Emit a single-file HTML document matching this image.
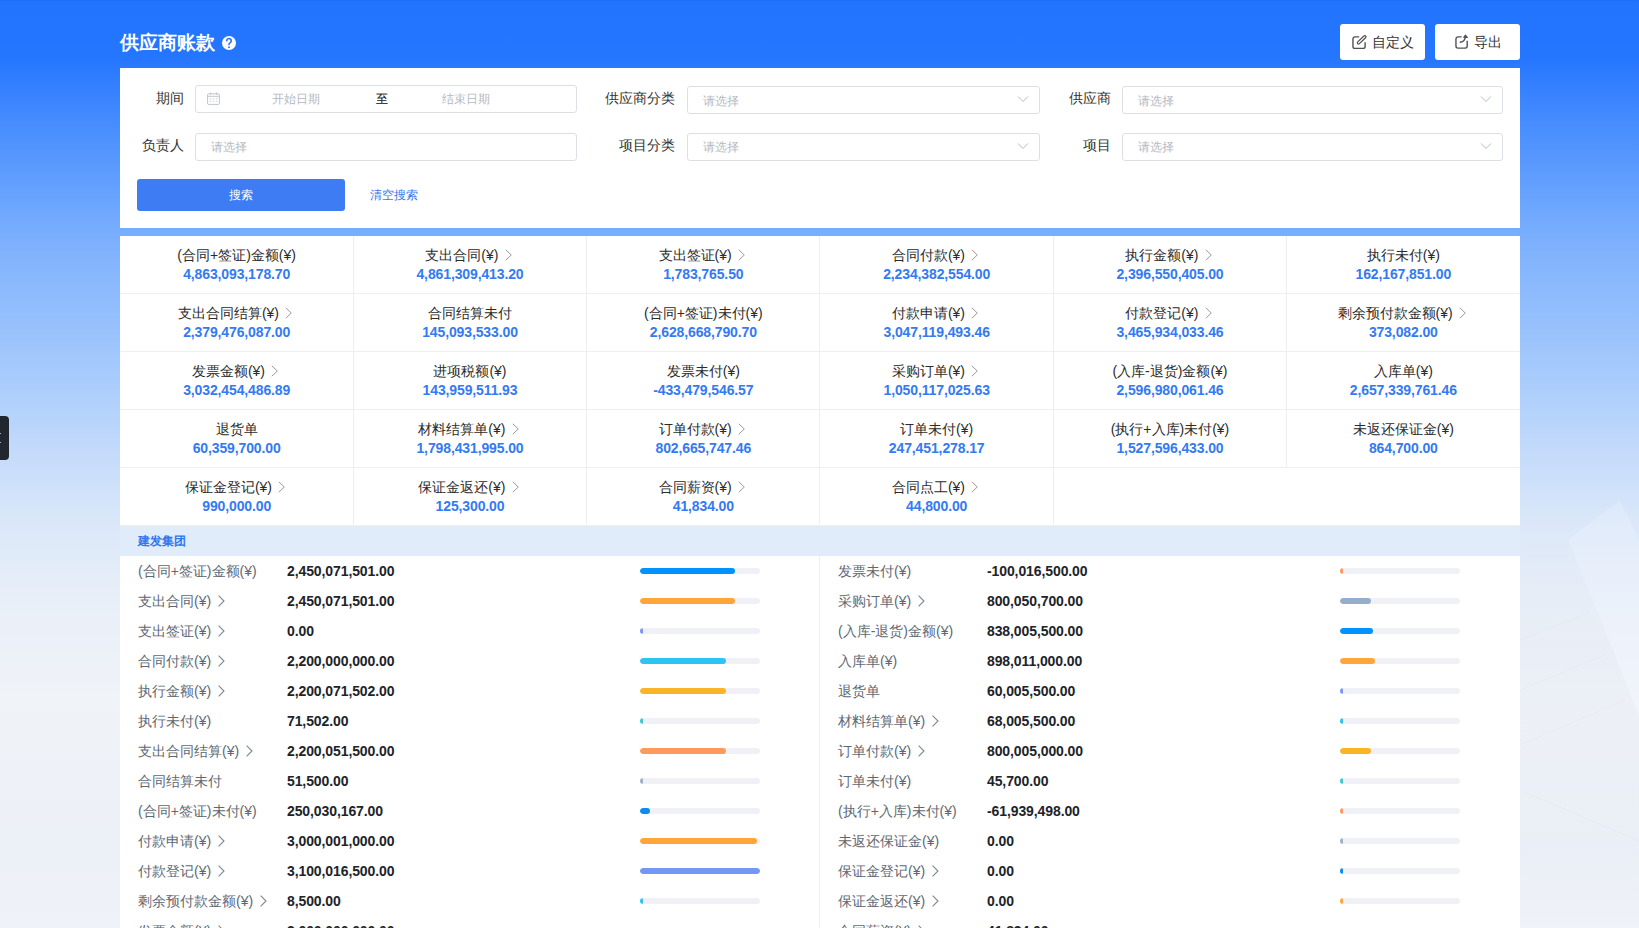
<!DOCTYPE html>
<html><head><meta charset="utf-8">
<style>
*{box-sizing:border-box;margin:0;padding:0}
html,body{width:1639px;height:928px;overflow:hidden}
body{position:relative;font-family:"Liberation Sans",sans-serif;background:linear-gradient(180deg,#1e6ff0 0px,#2274ff 2px,#2475ff 55px,#4a8ffe 130px,#7cb0fd 240px,#a6cafc 370px,#c3dafb 450px,#dae7f9 520px,#e9eff8 600px,#f0f3f8 700px,#ecf0f7 850px,#eff2f8 928px);}
.abs{position:absolute}
.title{position:absolute;left:120px;top:30.5px;color:#fff;font-size:18.6px;letter-spacing:0px;font-weight:bold;line-height:24px;letter-spacing:0px}
.q{position:absolute;left:222px;top:36px;width:14px;height:14px;border-radius:50%;background:#fff;color:#2675ff;font-size:11px;font-weight:bold;line-height:14px;text-align:center}
.btn{position:absolute;top:24px;height:36px;background:#fff;border-radius:3px;color:#333;font-size:14px;line-height:36px}
.card{position:absolute;left:120px;top:68px;width:1400px;height:160px;background:#fff}
.lab{position:absolute;font-size:14px;color:#333;line-height:20px;text-align:right}
.inp{position:absolute;height:28px;border:1px solid #dcdfe6;border-radius:3px;background:#fff}
.ph{position:absolute;font-size:12px;color:#b5b9c2;line-height:17px}
.chev{position:absolute;right:9.8px;top:8.2px}
.grid{position:absolute;left:120px;top:236px;width:1400px;height:290px;background:#fff}
.cell{position:absolute;width:233.333px;height:58px;text-align:center}
.gl{position:absolute;background:#efefef;display:block}
.cl{position:absolute;left:0;right:0;top:10px;font-size:14px;color:#2b2b2b;line-height:18px;white-space:nowrap}
.cl .arr{margin-left:2.4px;vertical-align:-1px}
.cv{position:absolute;left:0;right:0;top:30px;font-size:14px;letter-spacing:-0.12px;color:#347af2;font-weight:bold;line-height:16px}
.ghead{position:absolute;left:120px;top:526px;width:1400px;height:30px;background:#e1ecfb;color:#2f76f0;font-size:12px;font-weight:bold;line-height:30px;padding-left:18px}
.list{position:absolute;left:120px;top:556px;width:1400px;height:372px;background:#fff}
.vdiv{position:absolute;left:819px;top:556px;width:1px;height:372px;background:#eeeeee}
.dl{position:absolute;font-size:14px;color:#5e6873;line-height:30px;white-space:nowrap}
.dl .arr2{margin-left:3px;vertical-align:-1px}
.dv{position:absolute;font-size:14px;letter-spacing:-0.1px;color:#20242a;font-weight:bold;line-height:30px;white-space:nowrap}
.bar{position:absolute;width:120px;height:6px;border-radius:3px;background:#eff1f6;overflow:hidden}
.bar i{display:block;height:6px;border-radius:3px}
.tab{position:absolute;left:0;top:416px;width:9px;height:44px;background:#22262f;border-radius:0 4px 4px 0}
</style></head><body>
<svg class="abs" style="left:0;top:0" width="1639" height="928" viewBox="0 0 1639 928">
<defs><linearGradient id="bg1" x1="0" y1="0" x2="0" y2="1"><stop offset="0" stop-color="#dde4ee" stop-opacity="0"/><stop offset="0.35" stop-color="#dde4ee" stop-opacity="0.22"/><stop offset="0.8" stop-color="#dde4ee" stop-opacity="0.12"/><stop offset="1" stop-color="#dde4ee" stop-opacity="0"/></linearGradient></defs>
<polygon points="1555,500 1639,716 1639,928 1520,928 1520,500" fill="url(#bg1)"/>
<polygon points="1620,500 1639,540 1639,716 1568,540" fill="#f4f8ff" fill-opacity="0.25"/>
<g stroke="#d8dfea" stroke-width="1" stroke-opacity="0.22" fill="none">
<path d="M1520 640 L1590 612"/><path d="M1520 690 L1605 655"/><path d="M1520 745 L1625 700"/><path d="M1522 791 L1639 841"/>
</g>
</svg>
<div class="title">供应商账款</div>
<svg class="abs" style="left:221.7px;top:35.9px" width="14" height="14" viewBox="0 0 14 14"><circle cx="7" cy="7" r="7" fill="#fff"/><path d="M4.75 4.75 A2.25 2.25 0 1 1 8.3 6.6 Q7 7.5 7 8.4" fill="none" stroke="#2475ff" stroke-width="1.65" stroke-linecap="round"/><circle cx="7" cy="11.2" r="0.95" fill="#2475ff"/></svg>
<div class="btn" style="left:1340px;width:85px;"><svg class="abs" style="left:11px;top:10px" width="17" height="17" viewBox="0 0 17 17"><path d="M8.2 2.9 H4 A2 2 0 0 0 1.95 4.9 V12.4 A2 2 0 0 0 3.95 14.4 H12.1 A2 2 0 0 0 14.1 12.4 V8.3" fill="none" stroke="#505257" stroke-width="1.4"/><rect x="5.15" y="4.6" width="11" height="2.4" rx="1.2" fill="none" stroke="#505257" stroke-width="1.25" transform="rotate(-44 10.65 5.8)"/></svg><span style="position:absolute;left:32px">自定义</span></div>
<div class="btn" style="left:1435px;width:85px;"><svg class="abs" style="left:19px;top:10px" width="17" height="17" viewBox="0 0 17 17"><path d="M7.6 2.9 H4 A2 2 0 0 0 1.95 4.9 V12.1 A2 2 0 0 0 3.95 14.1 H11.2 A2 2 0 0 0 13.2 12.1 V6.7" fill="none" stroke="#505257" stroke-width="1.4"/><path d="M6.3 8.2 C9.2 7.9 11.2 5.9 11.4 2.2" fill="none" stroke="#505257" stroke-width="1.4" stroke-linecap="round"/><path d="M9.6 3.3 L11.5 1.2 L13.5 3.5 Z" fill="#505257" stroke="#505257" stroke-width="1.1" stroke-linejoin="round"/></svg><span style="position:absolute;left:38.6px">导出</span></div>
<div class="card">
 <div class="lab" style="left:35.5px;top:20.4px">期间</div>
 <div class="inp" style="left:75px;top:17px;width:382px"></div>
 <div class="lab" style="left:21.5px;top:67.4px">负责人</div>
 <div class="inp" style="left:75px;top:65px;width:382px"></div>
 <div class="ph" style="left:91px;top:71px">请选择</div>
 <div class="lab" style="left:485px;top:20.4px">供应商分类</div>
 <div class="inp" style="left:567px;top:18px;width:353px"><svg class="chev" width="12" height="8" viewBox="0 0 12 8"><path d="M1 1.5 L6 6.5 L11 1.5" fill="none" stroke="#b6bac3" stroke-width="1"/></svg></div>
 <div class="ph" style="left:583px;top:25px">请选择</div>
 <div class="lab" style="left:499px;top:67.4px">项目分类</div>
 <div class="inp" style="left:567px;top:65px;width:353px"><svg class="chev" width="12" height="8" viewBox="0 0 12 8"><path d="M1 1.5 L6 6.5 L11 1.5" fill="none" stroke="#b6bac3" stroke-width="1"/></svg></div>
 <div class="ph" style="left:583px;top:71px">请选择</div>
 <div class="lab" style="left:948.5px;top:20.4px">供应商</div>
 <div class="inp" style="left:1002px;top:18px;width:381px"><svg class="chev" width="12" height="8" viewBox="0 0 12 8"><path d="M1 1.5 L6 6.5 L11 1.5" fill="none" stroke="#b6bac3" stroke-width="1"/></svg></div>
 <div class="ph" style="left:1018px;top:25px">请选择</div>
 <div class="lab" style="left:962.5px;top:67.4px">项目</div>
 <div class="inp" style="left:1002px;top:65px;width:381px"><svg class="chev" width="12" height="8" viewBox="0 0 12 8"><path d="M1 1.5 L6 6.5 L11 1.5" fill="none" stroke="#b6bac3" stroke-width="1"/></svg></div>
 <div class="ph" style="left:1018px;top:71px">请选择</div>
<svg class="abs" style="left:87px;top:24px" width="13" height="13" viewBox="0 0 13 13"><rect x="0.6" y="1.8" width="11.8" height="10.6" rx="1" fill="none" stroke="#c0c4cc" stroke-width="1"/><path d="M0.6 4.3 H12.4" stroke="#c0c4cc" stroke-width="1"/><path d="M3.5 0.5 V2.8 M9.5 0.5 V2.8" stroke="#c0c4cc" stroke-width="1"/><g fill="#c9ccd3"><rect x="2.6" y="6.2" width="1.6" height="1"/><rect x="5.7" y="6.2" width="1.6" height="1"/><rect x="8.8" y="6.2" width="1.6" height="1"/><rect x="2.6" y="8.7" width="1.6" height="1"/><rect x="5.7" y="8.7" width="1.6" height="1"/><rect x="8.8" y="8.7" width="1.6" height="1"/></g></svg>
 <div class="ph" style="left:152px;top:23.4px">开始日期</div>
 <div class="lab" style="left:256px;top:20.8px;font-size:12px;color:#1a1a1a;font-weight:normal;-webkit-text-stroke:0.2px #1a1a1a">至</div>
 <div class="ph" style="left:322px;top:23.4px">结束日期</div>
 <div class="abs" style="left:17px;top:111px;width:208px;height:32px;background:#3e7cf4;border-radius:3px;color:#fff;font-size:12px;line-height:32px;text-align:center">搜索</div>
 <div class="abs" style="left:250px;top:117.5px;color:#3a78f0;font-size:12px;line-height:18px">清空搜索</div>
</div>
<div class="grid">
<div class="cell" style="left:0.000px;top:0px"><div class="cl">(合同+签证)金额(¥)</div><div class="cv">4,863,093,178.70</div></div>
<div class="cell" style="left:233.333px;top:0px"><div class="cl">支出合同(¥)<svg class="arr" width="14" height="12" viewBox="0 0 14 12"><path d="M4.8 0.8 L10.3 6 L4.8 11.2" fill="none" stroke="#9a9a9a" stroke-width="1"/></svg></div><div class="cv">4,861,309,413.20</div></div>
<div class="cell" style="left:466.667px;top:0px"><div class="cl">支出签证(¥)<svg class="arr" width="14" height="12" viewBox="0 0 14 12"><path d="M4.8 0.8 L10.3 6 L4.8 11.2" fill="none" stroke="#9a9a9a" stroke-width="1"/></svg></div><div class="cv">1,783,765.50</div></div>
<div class="cell" style="left:700.000px;top:0px"><div class="cl">合同付款(¥)<svg class="arr" width="14" height="12" viewBox="0 0 14 12"><path d="M4.8 0.8 L10.3 6 L4.8 11.2" fill="none" stroke="#9a9a9a" stroke-width="1"/></svg></div><div class="cv">2,234,382,554.00</div></div>
<div class="cell" style="left:933.333px;top:0px"><div class="cl">执行金额(¥)<svg class="arr" width="14" height="12" viewBox="0 0 14 12"><path d="M4.8 0.8 L10.3 6 L4.8 11.2" fill="none" stroke="#9a9a9a" stroke-width="1"/></svg></div><div class="cv">2,396,550,405.00</div></div>
<div class="cell" style="left:1166.667px;top:0px"><div class="cl">执行未付(¥)</div><div class="cv">162,167,851.00</div></div>
<div class="cell" style="left:0.000px;top:58px"><div class="cl">支出合同结算(¥)<svg class="arr" width="14" height="12" viewBox="0 0 14 12"><path d="M4.8 0.8 L10.3 6 L4.8 11.2" fill="none" stroke="#9a9a9a" stroke-width="1"/></svg></div><div class="cv">2,379,476,087.00</div></div>
<div class="cell" style="left:233.333px;top:58px"><div class="cl">合同结算未付</div><div class="cv">145,093,533.00</div></div>
<div class="cell" style="left:466.667px;top:58px"><div class="cl">(合同+签证)未付(¥)</div><div class="cv">2,628,668,790.70</div></div>
<div class="cell" style="left:700.000px;top:58px"><div class="cl">付款申请(¥)<svg class="arr" width="14" height="12" viewBox="0 0 14 12"><path d="M4.8 0.8 L10.3 6 L4.8 11.2" fill="none" stroke="#9a9a9a" stroke-width="1"/></svg></div><div class="cv">3,047,119,493.46</div></div>
<div class="cell" style="left:933.333px;top:58px"><div class="cl">付款登记(¥)<svg class="arr" width="14" height="12" viewBox="0 0 14 12"><path d="M4.8 0.8 L10.3 6 L4.8 11.2" fill="none" stroke="#9a9a9a" stroke-width="1"/></svg></div><div class="cv">3,465,934,033.46</div></div>
<div class="cell" style="left:1166.667px;top:58px"><div class="cl">剩余预付款金额(¥)<svg class="arr" width="14" height="12" viewBox="0 0 14 12"><path d="M4.8 0.8 L10.3 6 L4.8 11.2" fill="none" stroke="#9a9a9a" stroke-width="1"/></svg></div><div class="cv">373,082.00</div></div>
<div class="cell" style="left:0.000px;top:116px"><div class="cl">发票金额(¥)<svg class="arr" width="14" height="12" viewBox="0 0 14 12"><path d="M4.8 0.8 L10.3 6 L4.8 11.2" fill="none" stroke="#9a9a9a" stroke-width="1"/></svg></div><div class="cv">3,032,454,486.89</div></div>
<div class="cell" style="left:233.333px;top:116px"><div class="cl">进项税额(¥)</div><div class="cv">143,959,511.93</div></div>
<div class="cell" style="left:466.667px;top:116px"><div class="cl">发票未付(¥)</div><div class="cv">-433,479,546.57</div></div>
<div class="cell" style="left:700.000px;top:116px"><div class="cl">采购订单(¥)<svg class="arr" width="14" height="12" viewBox="0 0 14 12"><path d="M4.8 0.8 L10.3 6 L4.8 11.2" fill="none" stroke="#9a9a9a" stroke-width="1"/></svg></div><div class="cv">1,050,117,025.63</div></div>
<div class="cell" style="left:933.333px;top:116px"><div class="cl">(入库-退货)金额(¥)</div><div class="cv">2,596,980,061.46</div></div>
<div class="cell" style="left:1166.667px;top:116px"><div class="cl">入库单(¥)</div><div class="cv">2,657,339,761.46</div></div>
<div class="cell" style="left:0.000px;top:174px"><div class="cl">退货单</div><div class="cv">60,359,700.00</div></div>
<div class="cell" style="left:233.333px;top:174px"><div class="cl">材料结算单(¥)<svg class="arr" width="14" height="12" viewBox="0 0 14 12"><path d="M4.8 0.8 L10.3 6 L4.8 11.2" fill="none" stroke="#9a9a9a" stroke-width="1"/></svg></div><div class="cv">1,798,431,995.00</div></div>
<div class="cell" style="left:466.667px;top:174px"><div class="cl">订单付款(¥)<svg class="arr" width="14" height="12" viewBox="0 0 14 12"><path d="M4.8 0.8 L10.3 6 L4.8 11.2" fill="none" stroke="#9a9a9a" stroke-width="1"/></svg></div><div class="cv">802,665,747.46</div></div>
<div class="cell" style="left:700.000px;top:174px"><div class="cl">订单未付(¥)</div><div class="cv">247,451,278.17</div></div>
<div class="cell" style="left:933.333px;top:174px"><div class="cl">(执行+入库)未付(¥)</div><div class="cv">1,527,596,433.00</div></div>
<div class="cell" style="left:1166.667px;top:174px"><div class="cl">未返还保证金(¥)</div><div class="cv">864,700.00</div></div>
<div class="cell" style="left:0.000px;top:232px"><div class="cl">保证金登记(¥)<svg class="arr" width="14" height="12" viewBox="0 0 14 12"><path d="M4.8 0.8 L10.3 6 L4.8 11.2" fill="none" stroke="#9a9a9a" stroke-width="1"/></svg></div><div class="cv">990,000.00</div></div>
<div class="cell" style="left:233.333px;top:232px"><div class="cl">保证金返还(¥)<svg class="arr" width="14" height="12" viewBox="0 0 14 12"><path d="M4.8 0.8 L10.3 6 L4.8 11.2" fill="none" stroke="#9a9a9a" stroke-width="1"/></svg></div><div class="cv">125,300.00</div></div>
<div class="cell" style="left:466.667px;top:232px"><div class="cl">合同薪资(¥)<svg class="arr" width="14" height="12" viewBox="0 0 14 12"><path d="M4.8 0.8 L10.3 6 L4.8 11.2" fill="none" stroke="#9a9a9a" stroke-width="1"/></svg></div><div class="cv">41,834.00</div></div>
<div class="cell" style="left:700.000px;top:232px"><div class="cl">合同点工(¥)<svg class="arr" width="14" height="12" viewBox="0 0 14 12"><path d="M4.8 0.8 L10.3 6 L4.8 11.2" fill="none" stroke="#9a9a9a" stroke-width="1"/></svg></div><div class="cv">44,800.00</div></div>
<i class="gl" style="left:233px;top:0px;width:1px;height:58px"></i>
<i class="gl" style="left:466px;top:0px;width:1px;height:58px"></i>
<i class="gl" style="left:699px;top:0px;width:1px;height:58px"></i>
<i class="gl" style="left:933px;top:0px;width:1px;height:58px"></i>
<i class="gl" style="left:1166px;top:0px;width:1px;height:58px"></i>
<i class="gl" style="left:0;top:57px;width:1400px;height:1px"></i>
<i class="gl" style="left:233px;top:58px;width:1px;height:58px"></i>
<i class="gl" style="left:466px;top:58px;width:1px;height:58px"></i>
<i class="gl" style="left:699px;top:58px;width:1px;height:58px"></i>
<i class="gl" style="left:933px;top:58px;width:1px;height:58px"></i>
<i class="gl" style="left:1166px;top:58px;width:1px;height:58px"></i>
<i class="gl" style="left:0;top:115px;width:1400px;height:1px"></i>
<i class="gl" style="left:233px;top:116px;width:1px;height:58px"></i>
<i class="gl" style="left:466px;top:116px;width:1px;height:58px"></i>
<i class="gl" style="left:699px;top:116px;width:1px;height:58px"></i>
<i class="gl" style="left:933px;top:116px;width:1px;height:58px"></i>
<i class="gl" style="left:1166px;top:116px;width:1px;height:58px"></i>
<i class="gl" style="left:0;top:173px;width:1400px;height:1px"></i>
<i class="gl" style="left:233px;top:174px;width:1px;height:58px"></i>
<i class="gl" style="left:466px;top:174px;width:1px;height:58px"></i>
<i class="gl" style="left:699px;top:174px;width:1px;height:58px"></i>
<i class="gl" style="left:933px;top:174px;width:1px;height:58px"></i>
<i class="gl" style="left:1166px;top:174px;width:1px;height:58px"></i>
<i class="gl" style="left:0;top:231px;width:1400px;height:1px"></i>
<i class="gl" style="left:233px;top:232px;width:1px;height:58px"></i>
<i class="gl" style="left:466px;top:232px;width:1px;height:58px"></i>
<i class="gl" style="left:699px;top:232px;width:1px;height:58px"></i>
<i class="gl" style="left:933px;top:232px;width:1px;height:58px"></i>
<i class="gl" style="left:0;top:289px;width:1400px;height:1px"></i>
</div>
<div class="ghead">建发集团</div>
<div class="list"></div>
<div class="vdiv"></div>
<div class="dl" style="left:138px;top:556px">(合同+签证)金额(¥)</div><div class="dv" style="left:287px;top:556px">2,450,071,501.00</div><div class="bar" style="left:640px;top:568px"><i style="width:95px;background:#0093ff"></i></div>
<div class="dl" style="left:138px;top:586px">支出合同(¥)<svg class="arr2" width="14" height="12" viewBox="0 0 14 12"><path d="M4.6 0.6 L10 6 L4.6 11.4" fill="none" stroke="#7d8793" stroke-width="1.1"/></svg></div><div class="dv" style="left:287px;top:586px">2,450,071,501.00</div><div class="bar" style="left:640px;top:598px"><i style="width:95px;background:#ffa53a"></i></div>
<div class="dl" style="left:138px;top:616px">支出签证(¥)<svg class="arr2" width="14" height="12" viewBox="0 0 14 12"><path d="M4.6 0.6 L10 6 L4.6 11.4" fill="none" stroke="#7d8793" stroke-width="1.1"/></svg></div><div class="dv" style="left:287px;top:616px">0.00</div><div class="bar" style="left:640px;top:628px"><i style="width:3px;background:#7b98f5"></i></div>
<div class="dl" style="left:138px;top:646px">合同付款(¥)<svg class="arr2" width="14" height="12" viewBox="0 0 14 12"><path d="M4.6 0.6 L10 6 L4.6 11.4" fill="none" stroke="#7d8793" stroke-width="1.1"/></svg></div><div class="dv" style="left:287px;top:646px">2,200,000,000.00</div><div class="bar" style="left:640px;top:658px"><i style="width:86px;background:#2ec4f2"></i></div>
<div class="dl" style="left:138px;top:676px">执行金额(¥)<svg class="arr2" width="14" height="12" viewBox="0 0 14 12"><path d="M4.6 0.6 L10 6 L4.6 11.4" fill="none" stroke="#7d8793" stroke-width="1.1"/></svg></div><div class="dv" style="left:287px;top:676px">2,200,071,502.00</div><div class="bar" style="left:640px;top:688px"><i style="width:86px;background:#f9b526"></i></div>
<div class="dl" style="left:138px;top:706px">执行未付(¥)</div><div class="dv" style="left:287px;top:706px">71,502.00</div><div class="bar" style="left:640px;top:718px"><i style="width:3px;background:#3cc8d8"></i></div>
<div class="dl" style="left:138px;top:736px">支出合同结算(¥)<svg class="arr2" width="14" height="12" viewBox="0 0 14 12"><path d="M4.6 0.6 L10 6 L4.6 11.4" fill="none" stroke="#7d8793" stroke-width="1.1"/></svg></div><div class="dv" style="left:287px;top:736px">2,200,051,500.00</div><div class="bar" style="left:640px;top:748px"><i style="width:86px;background:#ff9a5c"></i></div>
<div class="dl" style="left:138px;top:766px">合同结算未付</div><div class="dv" style="left:287px;top:766px">51,500.00</div><div class="bar" style="left:640px;top:778px"><i style="width:3px;background:#9fb1cc"></i></div>
<div class="dl" style="left:138px;top:796px">(合同+签证)未付(¥)</div><div class="dv" style="left:287px;top:796px">250,030,167.00</div><div class="bar" style="left:640px;top:808px"><i style="width:10px;background:#0a8cf0"></i></div>
<div class="dl" style="left:138px;top:826px">付款申请(¥)<svg class="arr2" width="14" height="12" viewBox="0 0 14 12"><path d="M4.6 0.6 L10 6 L4.6 11.4" fill="none" stroke="#7d8793" stroke-width="1.1"/></svg></div><div class="dv" style="left:287px;top:826px">3,000,001,000.00</div><div class="bar" style="left:640px;top:838px"><i style="width:117px;background:#ffa53a"></i></div>
<div class="dl" style="left:138px;top:856px">付款登记(¥)<svg class="arr2" width="14" height="12" viewBox="0 0 14 12"><path d="M4.6 0.6 L10 6 L4.6 11.4" fill="none" stroke="#7d8793" stroke-width="1.1"/></svg></div><div class="dv" style="left:287px;top:856px">3,100,016,500.00</div><div class="bar" style="left:640px;top:868px"><i style="width:120px;background:#7398f3"></i></div>
<div class="dl" style="left:138px;top:886px">剩余预付款金额(¥)<svg class="arr2" width="14" height="12" viewBox="0 0 14 12"><path d="M4.6 0.6 L10 6 L4.6 11.4" fill="none" stroke="#7d8793" stroke-width="1.1"/></svg></div><div class="dv" style="left:287px;top:886px">8,500.00</div><div class="bar" style="left:640px;top:898px"><i style="width:3px;background:#2ec4f2"></i></div>
<div class="dl" style="left:138px;top:916px">发票金额(¥)<svg class="arr2" width="14" height="12" viewBox="0 0 14 12"><path d="M4.6 0.6 L10 6 L4.6 11.4" fill="none" stroke="#7d8793" stroke-width="1.1"/></svg></div><div class="dv" style="left:287px;top:916px">3,000,000,000.00</div><div class="bar" style="left:640px;top:928px"><i style="width:100px;background:#ff9a5c"></i></div>
<div class="dl" style="left:838px;top:556px">发票未付(¥)</div><div class="dv" style="left:987px;top:556px">-100,016,500.00</div><div class="bar" style="left:1340px;top:568px"><i style="width:3px;background:#ff9a5c"></i></div>
<div class="dl" style="left:838px;top:586px">采购订单(¥)<svg class="arr2" width="14" height="12" viewBox="0 0 14 12"><path d="M4.6 0.6 L10 6 L4.6 11.4" fill="none" stroke="#7d8793" stroke-width="1.1"/></svg></div><div class="dv" style="left:987px;top:586px">800,050,700.00</div><div class="bar" style="left:1340px;top:598px"><i style="width:31px;background:#94aecb"></i></div>
<div class="dl" style="left:838px;top:616px">(入库-退货)金额(¥)</div><div class="dv" style="left:987px;top:616px">838,005,500.00</div><div class="bar" style="left:1340px;top:628px"><i style="width:33px;background:#0093ff"></i></div>
<div class="dl" style="left:838px;top:646px">入库单(¥)</div><div class="dv" style="left:987px;top:646px">898,011,000.00</div><div class="bar" style="left:1340px;top:658px"><i style="width:35px;background:#ffa53a"></i></div>
<div class="dl" style="left:838px;top:676px">退货单</div><div class="dv" style="left:987px;top:676px">60,005,500.00</div><div class="bar" style="left:1340px;top:688px"><i style="width:3px;background:#7b98f5"></i></div>
<div class="dl" style="left:838px;top:706px">材料结算单(¥)<svg class="arr2" width="14" height="12" viewBox="0 0 14 12"><path d="M4.6 0.6 L10 6 L4.6 11.4" fill="none" stroke="#7d8793" stroke-width="1.1"/></svg></div><div class="dv" style="left:987px;top:706px">68,005,500.00</div><div class="bar" style="left:1340px;top:718px"><i style="width:3px;background:#2ec4f2"></i></div>
<div class="dl" style="left:838px;top:736px">订单付款(¥)<svg class="arr2" width="14" height="12" viewBox="0 0 14 12"><path d="M4.6 0.6 L10 6 L4.6 11.4" fill="none" stroke="#7d8793" stroke-width="1.1"/></svg></div><div class="dv" style="left:987px;top:736px">800,005,000.00</div><div class="bar" style="left:1340px;top:748px"><i style="width:31px;background:#f9b526"></i></div>
<div class="dl" style="left:838px;top:766px">订单未付(¥)</div><div class="dv" style="left:987px;top:766px">45,700.00</div><div class="bar" style="left:1340px;top:778px"><i style="width:3px;background:#3cc8d8"></i></div>
<div class="dl" style="left:838px;top:796px">(执行+入库)未付(¥)</div><div class="dv" style="left:987px;top:796px">-61,939,498.00</div><div class="bar" style="left:1340px;top:808px"><i style="width:3px;background:#ff9a5c"></i></div>
<div class="dl" style="left:838px;top:826px">未返还保证金(¥)</div><div class="dv" style="left:987px;top:826px">0.00</div><div class="bar" style="left:1340px;top:838px"><i style="width:3px;background:#9fb1cc"></i></div>
<div class="dl" style="left:838px;top:856px">保证金登记(¥)<svg class="arr2" width="14" height="12" viewBox="0 0 14 12"><path d="M4.6 0.6 L10 6 L4.6 11.4" fill="none" stroke="#7d8793" stroke-width="1.1"/></svg></div><div class="dv" style="left:987px;top:856px">0.00</div><div class="bar" style="left:1340px;top:868px"><i style="width:3px;background:#0a8cf0"></i></div>
<div class="dl" style="left:838px;top:886px">保证金返还(¥)<svg class="arr2" width="14" height="12" viewBox="0 0 14 12"><path d="M4.6 0.6 L10 6 L4.6 11.4" fill="none" stroke="#7d8793" stroke-width="1.1"/></svg></div><div class="dv" style="left:987px;top:886px">0.00</div><div class="bar" style="left:1340px;top:898px"><i style="width:3px;background:#ffa53a"></i></div>
<div class="dl" style="left:838px;top:916px">合同薪资(¥)<svg class="arr2" width="14" height="12" viewBox="0 0 14 12"><path d="M4.6 0.6 L10 6 L4.6 11.4" fill="none" stroke="#7d8793" stroke-width="1.1"/></svg></div><div class="dv" style="left:987px;top:916px">41,834.00</div><div class="bar" style="left:1340px;top:928px"><i style="width:3px;background:#7398f3"></i></div>
<div class="tab"><i style="position:absolute;left:0;top:17px;width:1px;height:1px;background:#aab0ba"></i><i style="position:absolute;left:0;top:26px;width:1px;height:1px;background:#aab0ba"></i></div>
</body></html>
